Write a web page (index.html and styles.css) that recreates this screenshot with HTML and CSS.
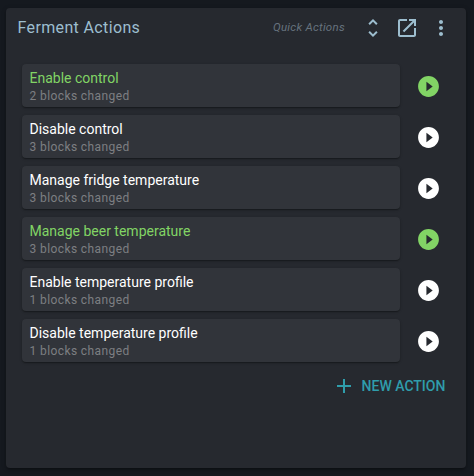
FILE: index.html
```html
<!DOCTYPE html>
<html lang="en">
<head>
<meta charset="utf-8">
<title>Ferment Actions</title>
<link rel="stylesheet" href="styles.css">
</head>
<body>
<svg class="defs" aria-hidden="true">
  <symbol id="play" viewBox="0 0 24 24"><path d="M12 2C6.48 2 2 6.48 2 12s4.48 10 10 10 10-4.480 10-10S17.520 2 12 2zm-2 14.500v-9l6 4.500-6 4.500z"/></symbol>
</svg>
<main class="card">
  <header class="toolbar">
    <h1 class="title">Ferment Actions</h1>
    <span class="kind">Quick Actions</span>
    <svg class="icon unfold" viewBox="0 0 24 24"><path d="M12 5.830 15.170 9l1.410-1.410L12 3 7.410 7.590 8.830 9 12 5.830zm0 12.340L8.830 15l-1.410 1.410L12 21l4.590-4.590L15.170 15 12 18.170z"/></svg>
    <svg class="icon open" viewBox="0 0 24 24"><path d="M19 19H5V5h7V3H5c-1.110 0-2 .9-2 2v14c0 1.100.89 2 2 2h14c1.100 0 2-.9 2-2v-7h-2v7zM14 3v2h3.590l-9.830 9.830 1.410 1.410L19 6.410V10h2V3h-7z"/></svg>
    <svg class="icon more" viewBox="0 0 24 24"><path d="M12 8c1.100 0 2-.9 2-2s-.9-2-2-2-2 .9-2 2 .9 2 2 2zm0 2c-1.100 0-2 .9-2 2s.9 2 2 2 2-.9 2-2-.9-2-2-2zm0 6c-1.100 0-2 .9-2 2s.9 2 2 2 2-.9 2-2-.9-2-2-2z"/></svg>
  </header>
  <ul class="list">
    <li class="row active"><div class="item"><div class="name">Enable control</div><div class="note">2 blocks changed</div></div><svg class="icon play"><use href="#play"/></svg></li>
    <li class="row"><div class="item"><div class="name">Disable control</div><div class="note">3 blocks changed</div></div><svg class="icon play"><use href="#play"/></svg></li>
    <li class="row"><div class="item"><div class="name">Manage fridge temperature</div><div class="note">3 blocks changed</div></div><svg class="icon play"><use href="#play"/></svg></li>
    <li class="row active"><div class="item"><div class="name">Manage beer temperature</div><div class="note">3 blocks changed</div></div><svg class="icon play"><use href="#play"/></svg></li>
    <li class="row"><div class="item"><div class="name">Enable temperature profile</div><div class="note">1 blocks changed</div></div><svg class="icon play"><use href="#play"/></svg></li>
    <li class="row"><div class="item"><div class="name">Disable temperature profile</div><div class="note">1 blocks changed</div></div><svg class="icon play"><use href="#play"/></svg></li>
  </ul>
  <div class="new"><svg class="icon" viewBox="0 0 24 24"><path d="M19 13h-6v6h-2v-6H5v-2h6V5h2v6h6v2z"/></svg><span>NEW ACTION</span></div>
</main>
</body>
</html>
```
FILE: styles.css
```css
* { box-sizing: border-box; }
body {
  margin: 0;
  height: 476px;
  padding: 8px 8px 8px 6px;
  background: #15191f;
  color: #fff;
  font-family: Roboto, "Liberation Sans", sans-serif;
  overflow: hidden;
}
.defs { position: absolute; width: 0; height: 0; }
.card {
  height: 460px;
  border-radius: 4px;
  background: #26292f;
  box-shadow: 0 1px 5px rgba(0,0,0,.2), 0 2px 2px rgba(0,0,0,.14), 0 3px 1px -2px rgba(0,0,0,.12);
}
.icon { width: 24px; height: 24px; flex: none; fill: currentColor; display: block; }
.icon.play { width: 25px; height: 25px; margin-top: 1px; }
.toolbar {
  height: 40px;
  display: flex;
  align-items: center;
  padding: 0 13.300px 0 11.500px;
  color: #9dbecf;
}
.title {
  flex: 1;
  margin: 0;
  font-size: 16px;
  font-weight: 400;
  letter-spacing: .36px;
  line-height: 40px;
}
.kind {
  font-size: 11.500px;
  font-style: italic;
  letter-spacing: .25px;
  color: #66737e;
  margin: 0 16.500px 2px 0;
}
.open { margin: 0 10px 0 9.300px; }
.list {
  list-style: none;
  margin: 0;
  padding: 16px 25px 0 16px;
  display: flex;
  flex-direction: column;
  gap: 8px;
}
.row { display: flex; align-items: center; justify-content: space-between; height: 43px; }
.item {
  width: 378px;
  height: 43px;
  padding: 4px 7.500px;
  border-radius: 4px;
  background: #31343a;
  box-shadow: 0 1px 3px rgba(0,0,0,.2), 0 1px 1px rgba(0,0,0,.14), 0 2px 1px -1px rgba(0,0,0,.12);
}
.name { font-size: 14px; line-height: 20px; }
.note { font-size: 12px; line-height: 17px; letter-spacing: .4px; color: #7d7f82; }
.active { color: #82d465; }
.new {
  display: flex;
  align-items: center;
  justify-content: flex-end;
  gap: 6px;
  height: 24px;
  margin-top: 12px;
  padding-right: 20.600px;
  color: #2f9dab;
  font-size: 14px;
  font-weight: 500;
}
```
